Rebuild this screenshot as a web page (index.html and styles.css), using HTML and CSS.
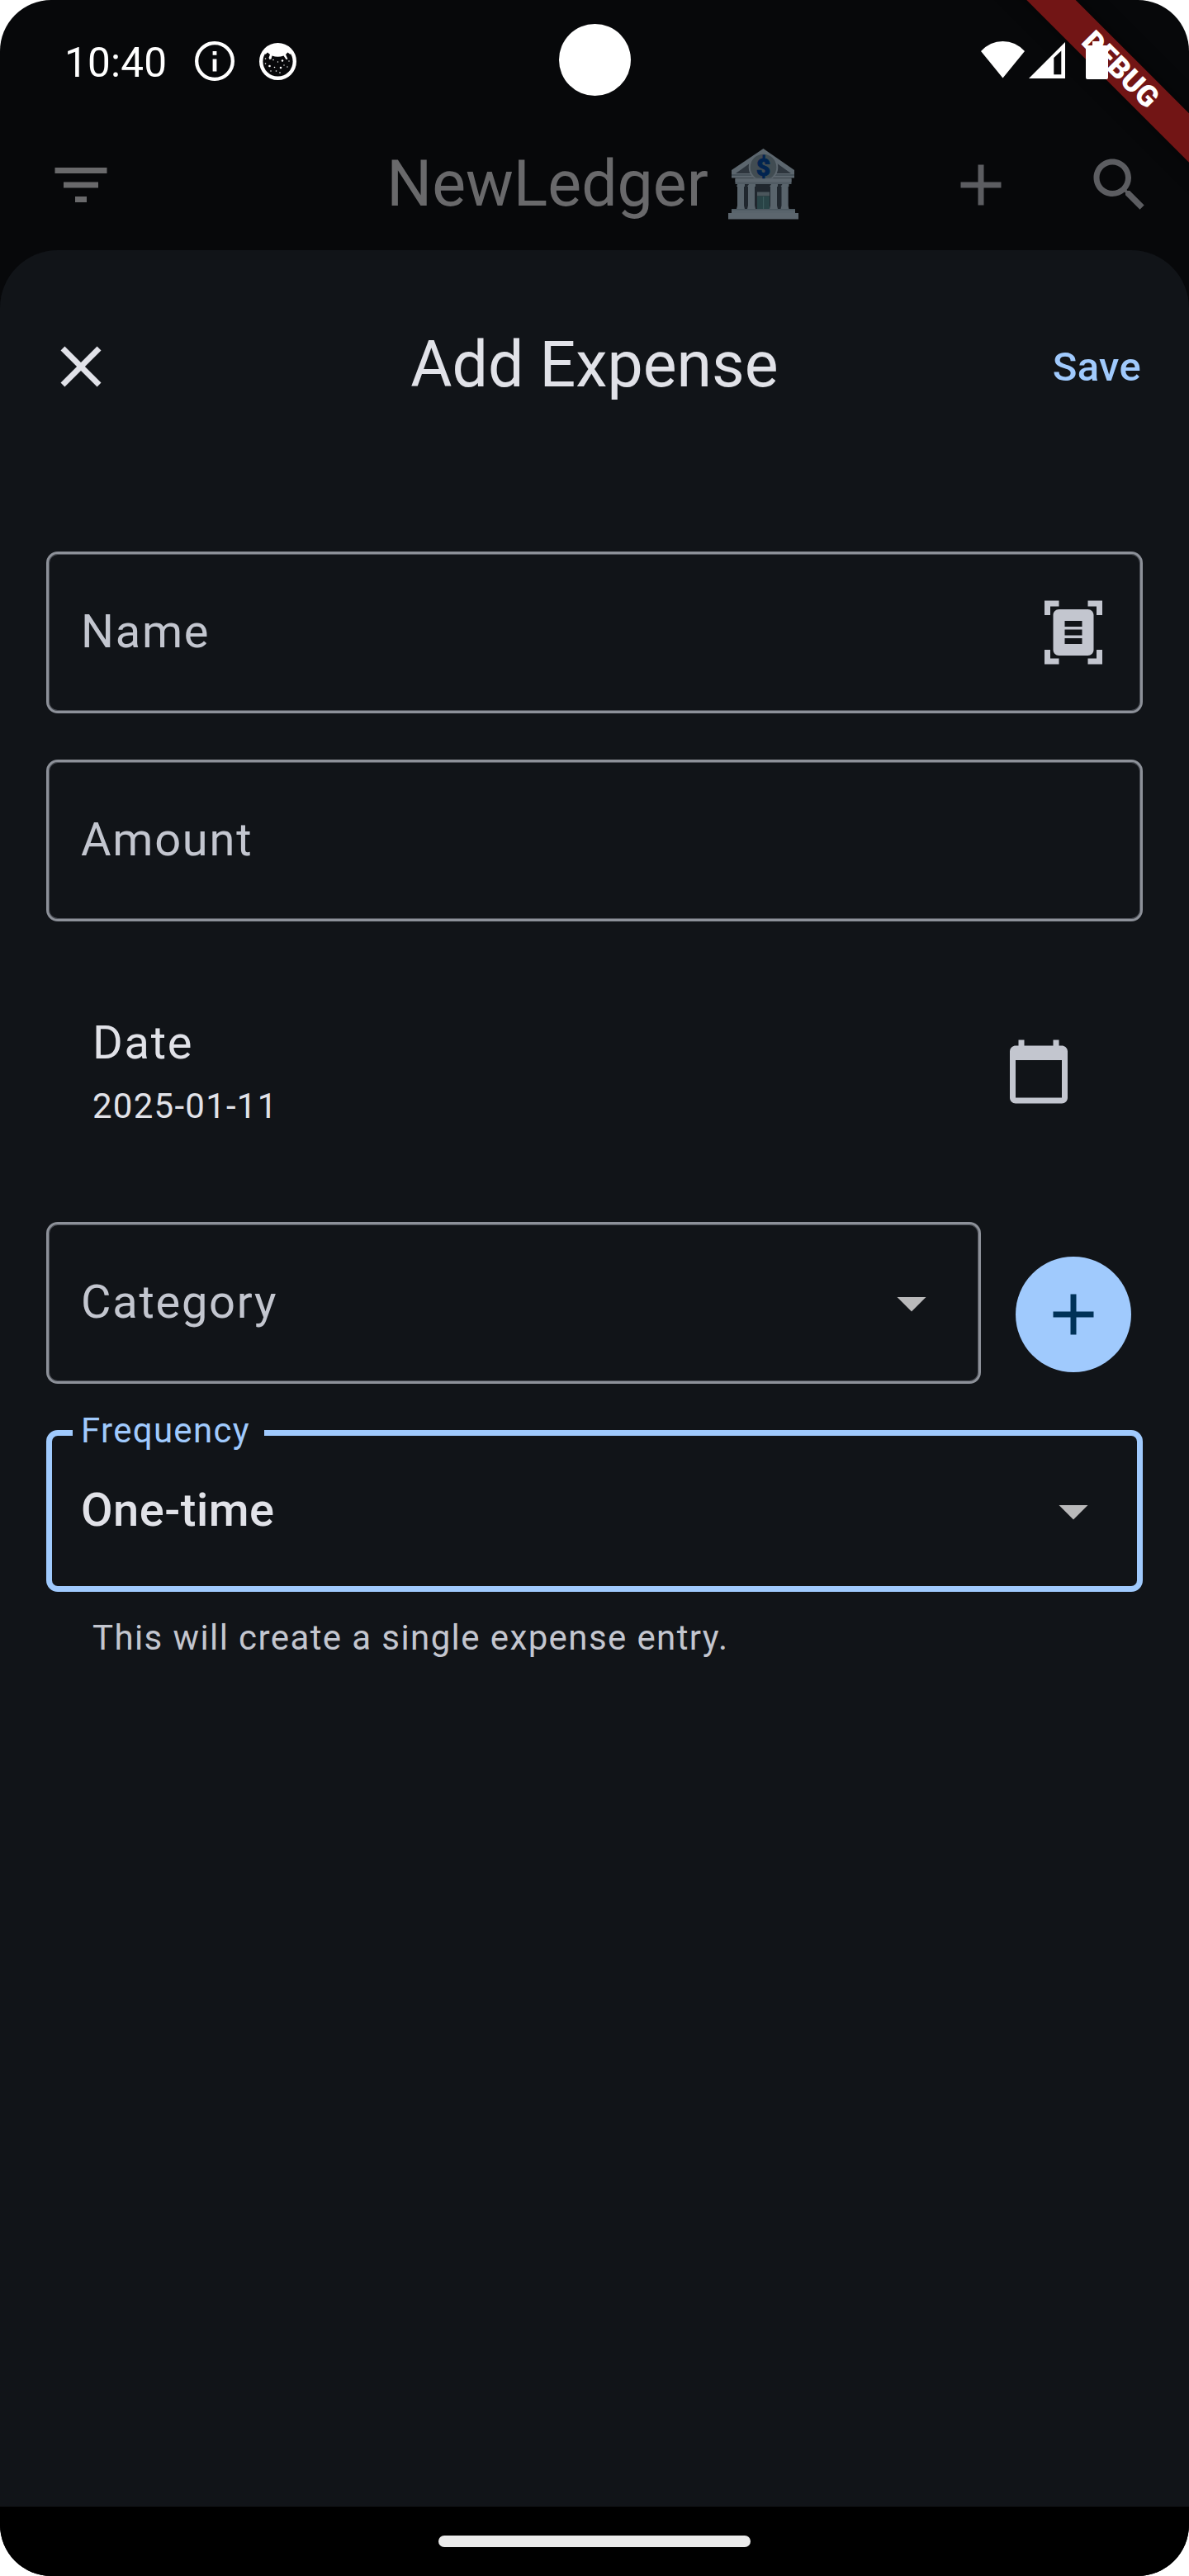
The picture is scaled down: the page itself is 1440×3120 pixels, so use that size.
FILE: index.html
```html
<!DOCTYPE html>
<html lang="en">
<head>
<meta charset="utf-8">
<title>Add Expense</title>
<link rel="stylesheet" href="styles.css">
</head>
<body>
<div class="screen">
  <div class="banner"><span>DEBUG</span></div>
  <div class="camera"></div>

  <div class="status">
    <span class="time">10:40</span>
    <svg class="info" viewBox="2 2 20 20"><path d="M11 7h2v2h-2zM11 11h2v6.2h-2z"/><circle cx="12" cy="12" r="9.1"/></svg>
    <svg class="cat" viewBox="0 0 45 45">
      <circle class="ring" cx="22.5" cy="22.5" r="20.3"/>
      <path d="M6 10 Q12 2 22.500 2 T39 10 L37.500 14 L34.500 11.500 L32 14 L34.500 19.500 L32.500 20 L29.500 15.500 Q22.500 18 15.500 15.500 L14.500 19.500 L12.500 20 L11.500 18 L13 14 L10 11.500 L7.500 14z"/>
      <g><circle cx="7.500" cy="19" r=".8"/><circle cx="17" cy="20.500" r=".8"/><circle cx="28" cy="21.500" r="1.200"/><circle cx="36" cy="22" r=".7"/><circle cx="22.500" cy="23" r=".7"/><circle cx="7.500" cy="25" r=".8"/><circle cx="12.500" cy="28" r="1.300"/><circle cx="18.500" cy="29.500" r=".8"/><circle cx="26" cy="30" r="1.300"/><circle cx="34" cy="29" r=".7"/><circle cx="30" cy="27" r=".7"/><circle cx="14" cy="34" r=".8"/><circle cx="20.500" cy="34" r=".8"/><circle cx="25" cy="36" r=".8"/></g>
    </svg>
    <svg class="wifi" viewBox="0 0 53 45"><path d="M0 12 Q11 0 26.500 0 T53 12 L26.500 44.500z"/></svg>
    <svg class="signal" viewBox="0 0 44 44"><path fill-rule="evenodd" d="M44 0V44H0zM39.300 10.500L30.300 19V39.300H39.300z"/></svg>
    <svg class="battery" viewBox="0 0 27 46"><path d="M8 0h11v5h6q2 0 2 2v37q0 2-2 2H2q-2 0-2-2V7q0-2 2-2h6z"/></svg>
  </div>

  <header class="appbar">
    <svg class="icon filter" viewBox="0 0 24 24"><path d="M10 18h4v-2h-4v2zM3 6v2h18V6H3zm3 7h12v-2H6v2z"/></svg>
    <div class="apptitle">NewLedger
      <svg class="bank" viewBox="0 0 85 86">
        <path fill="#20272e" d="M12 42h61v32H12z"/>
        <path fill="#5c666e" d="M42.500 0L80 26v9.500H4V26z"/>
        <path fill="#2d353d" d="M9 30L30 15v15zM76 30L55 15v15z"/>
        <path fill="#47525a" d="M4 31h76v2H4z"/>
        <circle cx="42.500" cy="22.500" r="16.800" fill="#414c52" stroke="#5c666e" stroke-width="2"/>
        <path fill="#505b63" d="M8.500 35.500h68V43h-68z"/>
        <path fill="#5c666e" d="M8.500 36.500h68v4h-68z"/>
        <path fill="#59646c" d="M11 43h9v3h-1v23l1 4h-10l1-4V46h-1zM25 43h8v3h-1v23l1 4h-10l1-4V46h-1zM52 43h8v3h-1v23l1 4h-10l1-4V46h-1zM65.500 43h8v3h-1v23l1 4h-10l1-4V46h-1z"/>
        <path fill="#4b565c" d="M35 52.500h15v5H35z"/>
        <path fill="#294447" d="M35 57.500h15V73H35z"/>
        <path fill="#3c5a5c" d="M42 58h1.200v15H42z"/>
        <path fill="#4b565e" d="M4 73h77v5H4z"/>
        <path fill="#59646c" d="M4 74.500h77V78H4z"/>
        <path fill="#5c666e" d="M0 78h85v7.500H0z"/>
        <text x="42.500" y="33" text-anchor="middle">$</text>
      </svg>
    </div>
    <div class="actions">
      <svg class="icon" viewBox="0 0 24 24"><path d="M19 13h-6v6h-2v-6H5v-2h6V5h2v6h6v2z"/></svg>
      <svg class="icon" viewBox="0 0 24 24"><path d="M15.500 14h-.79l-.28-.27C15.410 12.590 16 11.110 16 9.500 16 5.910 13.090 3 9.500 3S3 5.910 3 9.500 5.910 16 9.500 16c1.610 0 3.090-.59 4.230-1.570l.27.28v.79l5 4.990L20.490 19l-4.990-5zm-6 0C7.010 14 5 11.990 5 9.500S7.010 5 9.500 5 14 7.010 14 9.500 11.990 14 9.500 14z"/></svg>
    </div>
  </header>

  <main class="sheet">
    <div class="sheethead">
      <svg class="icon close" viewBox="0 0 24 24"><path d="M19 6.410L17.590 5 12 10.590 6.410 5 5 6.410 10.590 12 5 17.590 6.410 19 12 13.410 17.590 19 19 17.590 13.410 12z"/></svg>
      <h1>Add Expense</h1>
      <span class="save">Save</span>
    </div>
    <div class="form">
      <div class="field"><span>Name</span>
        <svg class="icon" viewBox="0 0 24 24"><path fill-rule="evenodd" d="M2 1h5v2H4v3H2zM17 1h5v5h-2V3h-3zM2 18h2v3h3v2H2zM20 18h2v5h-5v-2h3zM7 4h10c1.100 0 2 .9 2 2v12c0 1.100-.9 2-2 2H7c-1.100 0-2-.9-2-2V6c0-1.100.9-2 2-2zM9 8v2h6V8zM9 11v2h6v-2zM9 14v2h6v-2z"/></svg>
      </div>
      <div class="field"><span>Amount</span></div>
      <div class="daterow">
        <div><div class="label">Date</div><div class="value">2025-01-11</div></div>
        <svg class="icon" viewBox="0 0 24 24"><path d="M20 3h-1V1h-2v2H7V1H5v2H4c-1.100 0-2 .9-2 2v16c0 1.100.9 2 2 2h16c1.100 0 2-.9 2-2V5c0-1.100-.9-2-2-2zm0 18H4V8h16v13z"/></svg>
      </div>
      <div class="catrow">
        <div class="field"><span>Category</span><svg class="icon arrow" viewBox="0 0 24 24"><path d="M7 10l5 5 5-5z"/></svg></div>
        <div class="fab"><svg class="icon" viewBox="0 0 24 24"><path d="M19 13h-6v6h-2v-6H5v-2h6V5h2v6h6v2z"/></svg></div>
      </div>
      <div>
        <div class="field focused"><em>Frequency</em><span>One-time</span><svg class="icon arrow" viewBox="0 0 24 24"><path d="M7 10l5 5 5-5z"/></svg></div>
        <p class="helper">This will create a single expense entry.</p>
      </div>
    </div>
  </main>

  <footer class="nav"><div class="pill"></div></footer>
</div>
</body>
</html>
```
FILE: styles.css
```css
* { box-sizing: border-box; }
body { margin: 0; background: #fff; font-family: Roboto, "Liberation Sans", sans-serif; }
svg { display: block; flex: none; }
.screen {
  position: relative;
  display: flex;
  flex-direction: column;
  width: 1440px;
  height: 3120px;
  overflow: hidden;
  border-radius: 62px;
  background: #07080a;
}
.icon { width: 84px; height: 84px; fill: #c3c6cf; }

/* corner ribbon and camera cutout lie over the bars */
.banner {
  position: absolute;
  left: 1156px;
  top: 62px;
  width: 400px;
  height: 42px;
  padding-left: 3px;
  transform: rotate(45deg);
  background: #721515;
  box-shadow: 0 0 21px rgba(0, 0, 0, .5);
  color: #fff;
  font-size: 35.7px;
  font-weight: 900;
  line-height: 42px;
  text-align: center;
}
.camera {
  position: absolute;
  left: 677px;
  top: 29px;
  width: 87px;
  height: 87px;
  border-radius: 50%;
  background: #fff;
}

.status {
  position: relative;
  display: flex;
  align-items: center;
  height: 148px;
  padding: 0 98px 0 78px;
  fill: #fff;
  color: #fff;
}
.time { width: 158px; font-size: 49.5px; line-height: 58px; letter-spacing: .2px; padding-top: 3px; }
.info { width: 48px; height: 48px; margin-right: 30px; }
.info circle { fill: none; stroke: #fff; stroke-width: 1.8; }
.cat { width: 45px; height: 45px; }
.cat .ring { fill: none; stroke: #fff; stroke-width: 4.4; }
.wifi { width: 53px; height: 45px; margin: 0 5px 3px auto; }
.signal { width: 44px; height: 44px; margin: 0 25px 2px 0; }
.battery { width: 27px; height: 46px; margin-bottom: 2px; }

.appbar, .sheethead {
  display: grid;
  grid-template-columns: 1fr auto 1fr;
  align-items: center;
  padding: 0 42px;
}
.appbar { height: 155px; padding-bottom: 3px; }
.filter, .close { margin-left: 14px; }
.appbar .icon { fill: #5c5d61; }
.appbar .filter { fill: #69696b; }
.apptitle {
  display: flex;
  align-items: center;
  gap: 24px;
  height: 92px;
  padding: 0 5px 3px 0;
  font-size: 77px;
  color: #69696b;
}
.bank { width: 85px; height: 86px; }
.bank text { font-size: 30px; font-weight: 900; fill: #012450; stroke: #012450; stroke-width: .8; }
.actions { display: flex; justify-content: flex-end; gap: 84px; }

.sheet {
  flex: 1;
  padding-top: 43px;
  border-radius: 70px 70px 0 0;
  background: #111418;
}
.sheethead { height: 196px; padding-right: 58px; padding-left: 42px; }
.sheethead h1 {
  margin: 0;
  padding: 0 0 5px 16px;
  font-size: 77px;
  font-weight: 400;
  color: #e1e2e8;
}
.close { fill: #e1e2e8; }
.save { justify-self: end; font-size: 49px; font-weight: 500; letter-spacing: .35px; color: #a0cafd; }

.form {
  display: flex;
  flex-direction: column;
  gap: 56px;
  padding: 126px 56px 0;
}
.field {
  position: relative;
  display: flex;
  align-items: center;
  justify-content: space-between;
  height: 196px;
  padding: 0 39px;
  border: 3px solid #8d9199;
  border-radius: 14px;
  box-shadow: inset 0 0 0 1px #4f5259;
  color: #c3c6cf;
  font-size: 56px;
  letter-spacing: 1.75px;
}
.field span { padding-bottom: 2px; }
.daterow {
  display: flex;
  align-items: center;
  justify-content: space-between;
  height: 252px;
  padding: 0 84px 0 56px;
  color: #e1e2e8;
}
.label { font-size: 56px; line-height: 84px; letter-spacing: 1.75px; }
.value { font-size: 42px; line-height: 70px; letter-spacing: 1.25px; }
.catrow { display: flex; align-items: center; gap: 42px; padding-right: 14px; }
.catrow .field { flex: 1; }
.field .arrow { fill: #b9b9ba; }
.fab {
  display: flex;
  align-items: center;
  justify-content: center;
  width: 140px;
  height: 140px;
  margin-top: 28px;
  border-radius: 50%;
  background: #a0cafd;
}
.fab .icon { fill: #003258; }
.focused {
  padding: 0 35px;
  border: 7px solid #a0cafd;
  box-shadow: none;
  color: #e1e2e8;
  font-weight: 500;
  letter-spacing: .5px;
}
.focused em {
  position: absolute;
  left: 25px;
  top: -31px;
  width: 232px;
  padding-left: 10px;
  background: #111418;
  color: #a0cafd;
  font-size: 42px;
  font-style: normal;
  font-weight: 400;
  line-height: 50px;
  letter-spacing: 1.31px;
}
.helper {
  margin: 28px 0 0 56px;
  color: #c3c6cf;
  font-size: 42px;
  line-height: 56px;
  letter-spacing: 1.4px;
}

.nav {
  display: flex;
  align-items: center;
  justify-content: center;
  height: 84px;
  background: #000;
}
.pill { width: 378px; height: 14px; border-radius: 7px; background: #ebebeb; }
```
